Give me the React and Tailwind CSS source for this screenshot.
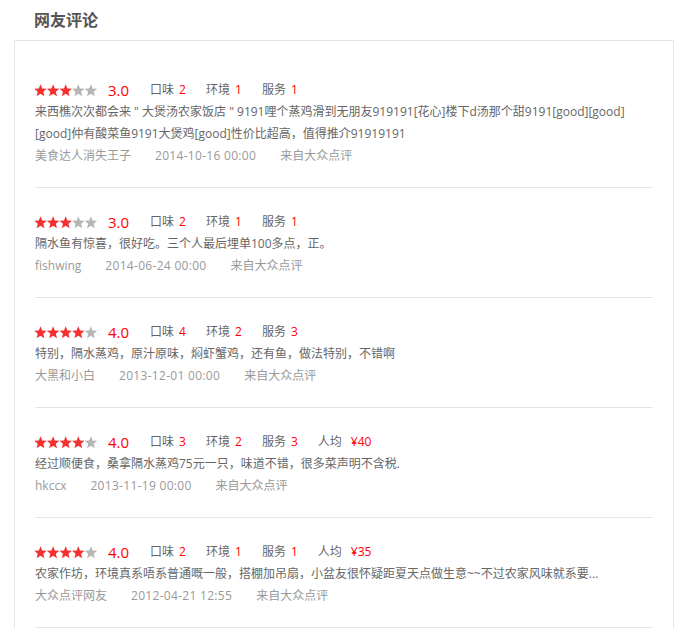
import React from 'react';

const reviews = [
    {
        stars: 3, score: '3.0', taste: 2, env: 1, service: 1, avg: null,
        text: '来西樵次次都会来 " 大煲汤农家饭店 " 9191哩个蒸鸡滑到无朋友919191[花心]楼下d汤那个甜9191[good][good][good]仲有酸菜鱼9191大煲鸡[good]性价比超高，值得推介91919191',
        user: '美食达人消失王子', date: '2014-10-16 00:00',
    },
    {
        stars: 3, score: '3.0', taste: 2, env: 1, service: 1, avg: null,
        text: '隔水鱼有惊喜，很好吃。三个人最后埋单100多点，正。',
        user: 'fishwing', date: '2014-06-24 00:00',
    },
    {
        stars: 4, score: '4.0', taste: 4, env: 2, service: 3, avg: null,
        text: '特别，隔水蒸鸡，原汁原味，焖虾蟹鸡，还有鱼，做法特别，不错啊',
        user: '大黑和小白', date: '2013-12-01 00:00',
    },
    {
        stars: 4, score: '4.0', taste: 3, env: 2, service: 3, avg: '¥40',
        text: '经过顺便食，桑拿隔水蒸鸡75元一只，味道不错，很多菜声明不含税.',
        user: 'hkccx', date: '2013-11-19 00:00',
    },
    {
        stars: 4, score: '4.0', taste: 2, env: 1, service: 1, avg: '¥35',
        text: '农家作坊，环境真系唔系普通嘅一般，搭棚加吊扇，小盆友很怀疑距夏天点做生意~~不过农家风味就系要...',
        user: '大众点评网友', date: '2012-04-21 12:55',
    },
];

const STAR = '6.5,0.2 8.2,4.45 12.78,4.76 9.26,7.7 10.38,12.14 6.5,9.7 2.62,12.14 3.74,7.7 0.22,4.76 4.8,4.45';

// row of five stars, 12.6px pitch like the original sprite
const Stars = ({ count }) => (
    <svg width="64" height="13" viewBox="0 0 64 13" className="shrink-0 -ml-px">
        {[0, 1, 2, 3, 4].map(n => (
            <polygon
                key={n}
                points={STAR}
                transform={`translate(${n * 12.6} 0)`}
                fill={n < count ? '#f43030' : '#b5b5b5'}
            />
        ))}
    </svg>
);

const Score = ({ label, value }) => (
    <span className="mr-5 text-[#666]">
        {label}<span className="ml-[5px] text-[#f00]">{value}</span>
    </span>
);

export default function App() {
    return (
        <div
            className="min-h-screen bg-white text-[12px]"
            style={{ fontFamily: '"Open Sans", "Noto Sans CJK SC", sans-serif' }}
        >
            <h2 className="h-10 flex items-center pl-[34px] text-[16px] font-bold text-[#555]">网友评论</h2>

            <div className="ml-[14px] w-[660px] border border-[#e5e5e5] border-b-0 pt-[15px] px-5">
                {reviews.map((r, i) => (
                    <div key={i} className="border-b border-[#e5e5e5] pt-[23px] pb-[20px] leading-[22px]">
                        {/* rating row */}
                        <div className="flex items-center h-[22px]">
                            <Stars count={r.stars} />
                            <span className="ml-[10px] mr-[21px] text-[15px] text-[#f00]">{r.score}</span>
                            <Score label="口味" value={r.taste} />
                            <Score label="环境" value={r.env} />
                            <Score label="服务" value={r.service} />
                            {r.avg && (
                                <span className="text-[#666]">
                                    人均<span className="ml-[9px] text-[#f00]">{r.avg}</span>
                                </span>
                            )}
                        </div>
                        <p className="text-[#666]">{r.text}</p>
                        <div className="flex text-[#999]">
                            <span className="mr-6">{r.user}</span>
                            <span className="mr-6 tracking-[0.3px]">{r.date}</span>
                            <span>来自大众点评</span>
                        </div>
                    </div>
                ))}
            </div>
        </div>
    );
}
